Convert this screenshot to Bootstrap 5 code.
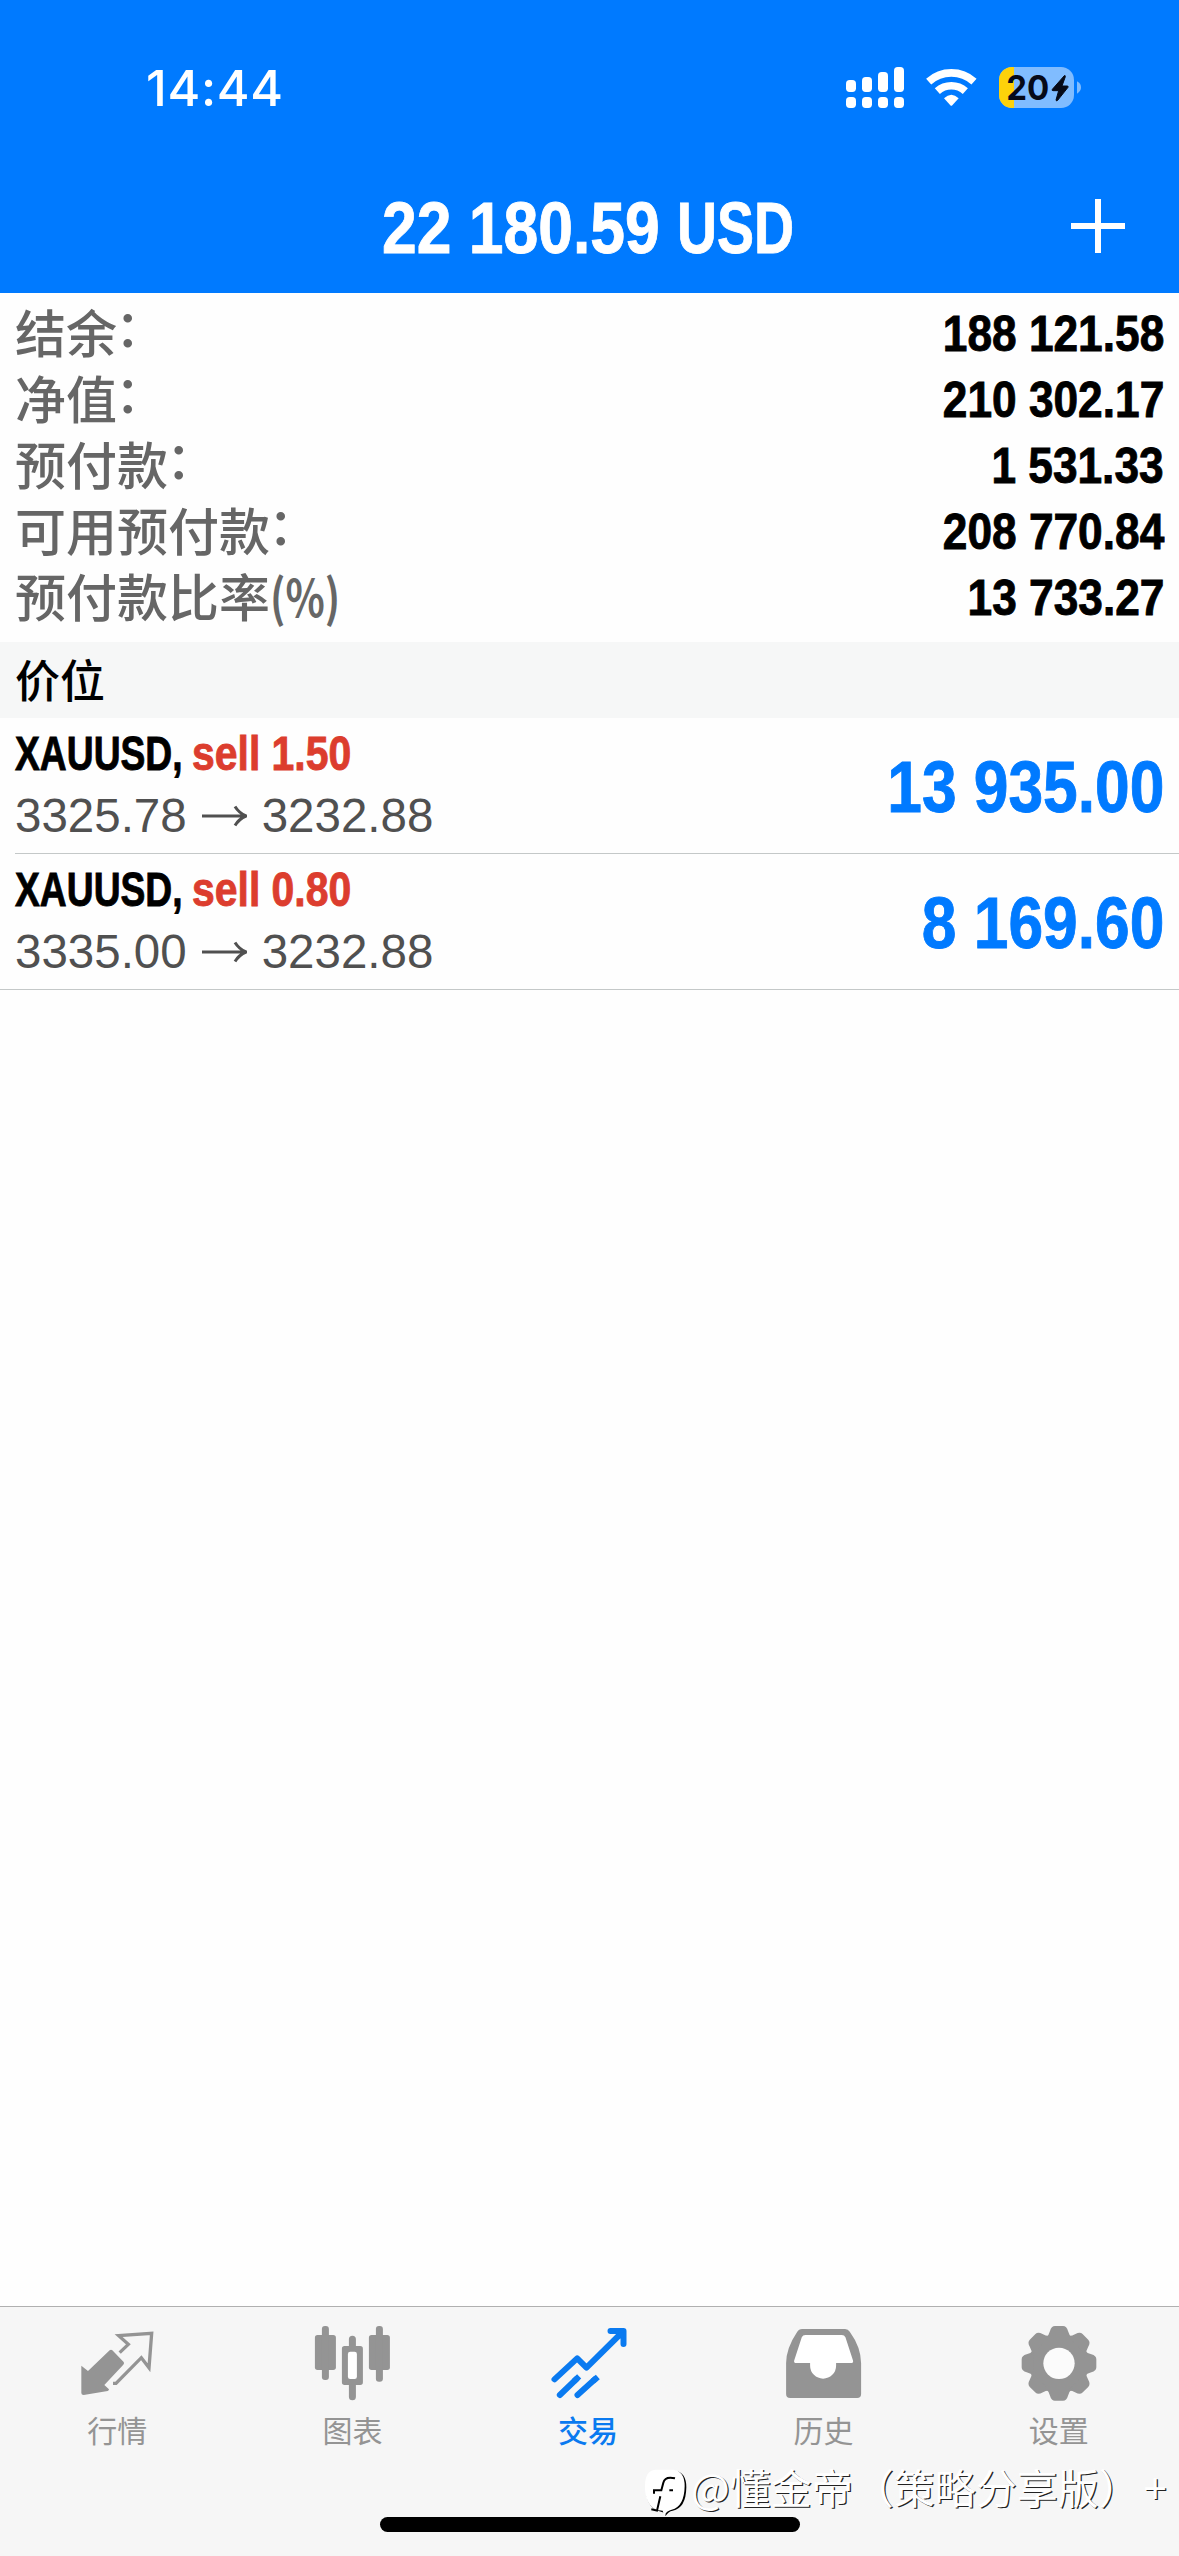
<!DOCTYPE html>
<html lang="zh-CN">
<head>
<meta charset="utf-8">
<meta name="viewport" content="width=device-width, initial-scale=1">
<title>交易</title>
<link rel="stylesheet" href="https://cdn.jsdelivr.net/npm/bootstrap@5.3.0/dist/css/bootstrap.min.css">
<style>
  html, body { height: 100%; }
  body { font-family: "Liberation Sans", "Noto Sans CJK SC", sans-serif; background: #fefefe; color: #000; overflow: hidden; }
  .screen { height: 2556px; }
  .topbar { height: 293px; background: #007aff; color: #fff; }
  .statusbar { height: 178px; padding: 65px 98px 0 146px; }
  .clock { font: 500 50px/47px Inter, sans-serif; letter-spacing: 0.7px; }
  .titlebar { height: 115px; padding-right: 54px; padding-left: 382px; }
  .plus-icon { margin-top: 21px; }
  .squeeze { display: inline-block; white-space: nowrap; font-weight: 700; transform-origin: 0 50%; -webkit-text-stroke: .9px currentColor; }
  .squeeze-end { display: inline-block; white-space: nowrap; font-weight: 700; transform: scaleX(.865); transform-origin: 100% 50%; -webkit-text-stroke: .9px currentColor; }
  .title-num { font-size: 73px; line-height: 100px; width: 295px; transform: scaleX(.855); }
  .title-cur { font-size: 73px; line-height: 100px; width: 120px; transform: scaleX(.76); }
  .summary { height: 349px; padding: 8px 15px 0; }
  .summary-row { height: 66px; }
  .summary-label { font: 500 51px/60px "Noto Sans CJK SC", sans-serif; color: #666; white-space: nowrap; height: 60px; }
  .summary-colon { display: inline-block; transform: translate(-2px, -6px); }
  .summary-pct { transform: scaleX(.8); transform-origin: 0 50%; display: inline-block; font-weight: 700; }
  .summary-value { font-size: 50px; line-height: 66px; transform: scaleX(.885); }
  .section-head { height: 76px; padding-left: 15px; background: #f6f7f7; font: 500 45px/74px "Noto Sans CJK SC", sans-serif; }
  .position { height: 136px; padding-right: 15px; margin-left: 15px; border-bottom: 1px solid #c4c8c8; }
  .position:last-child { margin-left: 0; padding-left: 15px; }
  .pos-top { font-size: 49px; line-height: 60px; height: 60px; margin-top: 5px; }
  .pos-symbol { width: 177px; transform: scaleX(.76); }
  .pos-side { color: #dc3d2e; transform: scaleX(.835); }
  .pos-prices { font-size: 47.5px; line-height: 66px; color: #505050; }
  .pos-arrow { width: 45px; height: 22px; margin: 0 15px; }
  .pos-profit { font-size: 72px; line-height: 139px; height: 134px; }
  .pos-profit { color: #007aff; }
  .tabs { height: 250px; background: #f6f6f6; border-top: 1px solid #b0b0b0; padding-right: 2px; }
  .tab { color: #949494; padding-top: 17px; font: 400 30px/44px "Noto Sans CJK SC", sans-serif; }
  .tab svg { width: 76px; height: 76px; overflow: visible; display: block; margin-bottom: 7px; }
  .tab span { margin-right: 1px; }
  .tab.current { color: #0a7af0; font-weight: 500; }
  .home-bar { left: 380px; top: 2517px; width: 420px; height: 15px; background: #000; border-radius: 8px; }
  .credit { left: 644px; top: 2458px; color: #fff; font: 400 41px/56px "Noto Sans CJK SC", sans-serif; white-space: nowrap; }
  .credit-text { text-shadow: 1.3px .8px 0 #222; margin-left: -1px; }
  .credit-plus { margin-left: 4px; }
  .credit svg { width: 48px; height: 60px; overflow: visible; }
</style>
</head>
<body>
<div class="screen d-flex flex-column position-relative">
  <header class="topbar flex-shrink-0">
    <div class="statusbar d-flex justify-content-between align-items-start">
      <span class="clock">14:44</span>
      <svg width="235" height="45" viewBox="48 45 705 135" fill="#fff">
        <rect x="48" y="90" width="30" height="36" rx="11"/><rect x="96" y="81" width="30" height="45" rx="11"/>
        <rect x="144" y="66" width="30" height="60" rx="11"/><rect x="192" y="51" width="30" height="75" rx="11"/>
        <rect x="48" y="141" width="30" height="33" rx="11"/><rect x="96" y="141" width="30" height="33" rx="11"/>
        <rect x="144" y="141" width="30" height="33" rx="11"/><rect x="192" y="141" width="30" height="33" rx="11"/>
        <g fill="none" stroke="#fff" stroke-width="23"><path d="M296 94.600A101.500 101.500 0 0 1 432 94.600"/><path d="M322 123.200A63 63 0 0 1 406 123.200"/></g>
        <path d="M342 145Q364 124 386 145L367 166Q364 169 361 166Z"/>
        <clipPath id="cell"><rect x="507" y="51" width="225" height="123" rx="39"/></clipPath>
        <g clip-path="url(#cell)"><rect x="507" y="51" width="225" height="123" fill="#80bcff"/><rect x="507" y="51" width="45" height="123" fill="#fdd20a"/></g>
        <path d="M741 94Q753 100 753 112T741 131Z" fill="#80bcff"/>
        <text x="529" y="150" font-family="Inter, sans-serif" font-weight="700" font-size="103" textLength="129" lengthAdjust="spacingAndGlyphs" fill="#060a18">20</text>
        <path d="M703 77L667 118Q665 122 669 122H686L678 150Q679 155 683 151L714 112Q716 108 711 108H696L706 80Q706 75 703 77Z" fill="#060a18" stroke="#060a18" stroke-width="3"/>
      </svg>
    </div>
    <div class="titlebar d-flex justify-content-between">
      <div class="d-flex"><span class="squeeze title-num">22 180.59</span><span class="squeeze title-cur">USD</span></div>
      <svg class="plus-icon" width="54" height="54" viewBox="0 0 54 54" stroke="#fff" stroke-width="6"><path d="M27 0V54M0 27H54"/></svg>
    </div>
  </header>

  <main class="flex-grow-1">
    <section class="summary">
      <div class="summary-row d-flex justify-content-between"><span class="summary-label">结余<span class="summary-colon">：</span></span><span class="squeeze-end summary-value">188 121.58</span></div>
      <div class="summary-row d-flex justify-content-between"><span class="summary-label">净值<span class="summary-colon">：</span></span><span class="squeeze-end summary-value">210 302.17</span></div>
      <div class="summary-row d-flex justify-content-between"><span class="summary-label">预付款<span class="summary-colon">：</span></span><span class="squeeze-end summary-value">1 531.33</span></div>
      <div class="summary-row d-flex justify-content-between"><span class="summary-label">可用预付款<span class="summary-colon">：</span></span><span class="squeeze-end summary-value">208 770.84</span></div>
      <div class="summary-row d-flex justify-content-between"><span class="summary-label">预付款比率<span class="summary-pct">(%)</span></span><span class="squeeze-end summary-value">13 733.27</span></div>
    </section>
    <div class="section-head">价位</div>
    <section>
      <div class="position d-flex justify-content-between">
        <div>
          <div class="pos-top d-flex"><span class="squeeze pos-symbol">XAUUSD,</span><span class="squeeze pos-side">sell 1.50</span></div>
          <div class="pos-prices d-flex align-items-center"><span>3325.78</span><svg class="pos-arrow" viewBox="0 0 45 22" fill="none" stroke="#505050" stroke-width="3"><path d="M0 11H44M33 1.500Q37 8 44 11Q37 14 33 20.500"/></svg><span>3232.88</span></div>
        </div>
        <span class="squeeze-end pos-profit">13 935.00</span>
      </div>
      <div class="position d-flex justify-content-between">
        <div>
          <div class="pos-top d-flex"><span class="squeeze pos-symbol">XAUUSD,</span><span class="squeeze pos-side">sell 0.80</span></div>
          <div class="pos-prices d-flex align-items-center"><span>3335.00</span><svg class="pos-arrow" viewBox="0 0 45 22" fill="none" stroke="#505050" stroke-width="3"><path d="M0 11H44M33 1.500Q37 8 44 11Q37 14 33 20.500"/></svg><span>3232.88</span></div>
        </div>
        <span class="squeeze-end pos-profit">8 169.60</span>
      </div>
    </section>
  </main>

  <nav class="tabs d-flex flex-shrink-0">
    <div class="tab d-flex flex-column align-items-center flex-fill w-100">
      <svg viewBox="59 72 228 228" fill="currentColor"><path d="M63 197L83 213L148 151Q152 147 156 151L190 186Q193 190 189 194L132 255L146 268Q146 272 142 273L70 285Q63 285 63 279Z"/><path d="M178 158L204 133L175 107L274 100L266 203L243 173L167 250H158" fill="none" stroke="currentColor" stroke-width="10"/></svg>
      <span>行情</span>
    </div>
    <div class="tab d-flex flex-column align-items-center flex-fill w-100">
      <svg viewBox="765.300 72 228 228" fill="currentColor"><rect x="765" y="105" width="63" height="105" rx="8"/><rect x="786" y="78" width="21" height="162" rx="9"/><rect x="927" y="105" width="63" height="105" rx="8"/><rect x="948" y="78" width="21" height="167" rx="9"/><path d="M867 138V118a10.500 10.500 0 0 1 21 0V138H901Q909 138 909 146V247Q909 255 901 255H888V290a10.500 10.500 0 0 1 -21 0V255H854Q846 255 846 247V146Q846 138 854 138Z"/><rect x="864" y="155" width="27" height="82" rx="7" fill="#fff"/></svg>
      <span>图表</span>
    </div>
    <div class="tab current d-flex flex-column align-items-center flex-fill w-100">
      <svg viewBox="91.500 72 228 228" fill="none" stroke="currentColor" stroke-width="18" stroke-linecap="round" stroke-linejoin="round"><path d="M102 238L170 175L198 203L306 96M270 93H309V132"/><path d="M285 95L308 117L308 94Z" stroke-width="4" fill="currentColor"/><path d="M118 285L168 237M171 285L224 237"/><path d="M160 244L176 229M217 244L232 231" stroke-linecap="butt"/></svg>
      <span>交易</span>
    </div>
    <div class="tab d-flex flex-column align-items-center flex-fill w-100">
      <svg viewBox="797.700 72 228 228"><path fill="currentColor" d="M831 96Q836 87 846 87H975Q984 87 989 95Q1023 142 1023 190V282Q1023 294 1011 294H810Q798 294 798 282V190Q798 145 831 96Z"/><path fill="#fff" d="M822 182L845 112Q848 105 856 105H965Q973 105 976 112L999 182Q1000 189 993 189H948V197a39 39 0 0 1 -78 0V189H828Q821 189 822 182Z"/></svg>
      <span>历史</span>
    </div>
    <div class="tab d-flex flex-column align-items-center flex-fill w-100">
      <svg viewBox="64 72 228 228"><defs><path id="tooth" d="M-40 -76Q-30 -84 -27 -97Q-23 -112 -12 -112H12Q23 -112 27 -97Q30 -84 40 -76Z"/></defs>
        <g transform="translate(178 190)" fill="currentColor"><circle r="86"/><use href="#tooth"/><use href="#tooth" transform="rotate(45)"/><use href="#tooth" transform="rotate(90)"/><use href="#tooth" transform="rotate(135)"/><use href="#tooth" transform="rotate(180)"/><use href="#tooth" transform="rotate(225)"/><use href="#tooth" transform="rotate(270)"/><use href="#tooth" transform="rotate(315)"/><circle r="47" fill="#fbfbfb"/></g></svg>
      <span>设置</span>
    </div>
  </nav>

  <div class="home-bar position-absolute"></div>
  <div class="credit position-absolute d-flex">
    <svg viewBox="12 24 144 180"><path d="M50 62H104Q139 66 139 112Q138 175 98 182Q85 184 76 199L77 190L56 183Q17 170 18 110Q19 64 50 62Z" fill="#000"/><path d="M46 59H100Q134 63 134 108Q133 170 95 179Q82 182 72 195L68 182L50 180Q14 165 15 106Q16 61 46 59Z" fill="#fff"/><path d="M105 85Q75 78 70 98L64 121H42V131M88 121H99M61 139L51 182L34 178" fill="none" stroke="#000" stroke-width="6"/></svg>
    <span class="credit-text">@懂金帝（策略分享版）<span class="credit-plus">+</span></span>
  </div>
</div>
<script src="https://cdn.jsdelivr.net/npm/bootstrap@5.3.0/dist/js/bootstrap.bundle.min.js"></script>
</body>
</html>
